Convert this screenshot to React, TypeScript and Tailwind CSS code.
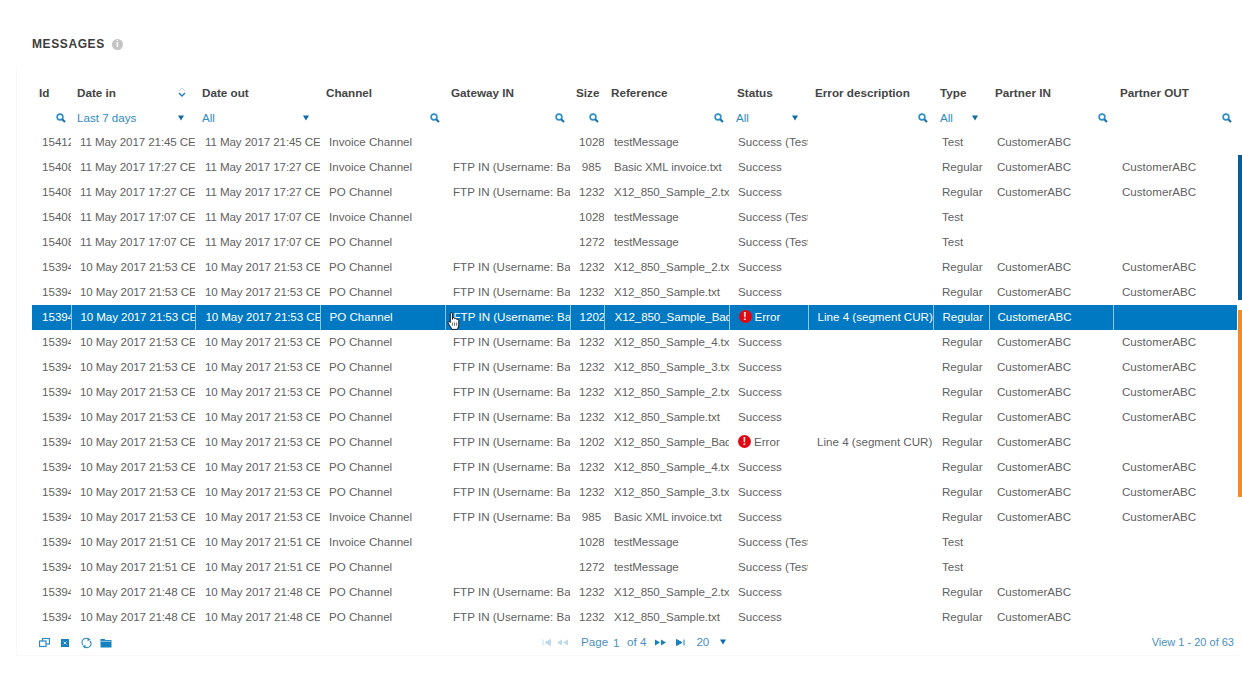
import React from "react";

const CABC = "CustomerABC";
const FTP = "FTP IN (Username: Basic)";
type Row = [string, string, string, string, string, string, string, string, string, string, string];
const d1 = "10 May 2017 21:53 CEST";
const S = "Success";
const T = "Success (Test)";
const E = "Line 4 (segment CUR), element 2";
const rows: Row[] = [
  ["15412", "11 May 2017 21:45 CEST", "Invoice Channel", "", "1028", "testMessage", T, "", "Test", CABC, ""],
  ["15408", "11 May 2017 17:27 CEST", "Invoice Channel", FTP, "985", "Basic XML invoice.txt", S, "", "Regular", CABC, CABC],
  ["15408", "11 May 2017 17:27 CEST", "PO Channel", FTP, "1232", "X12_850_Sample_2.txt", S, "", "Regular", CABC, CABC],
  ["15408", "11 May 2017 17:07 CEST", "Invoice Channel", "", "1028", "testMessage", T, "", "Test", "", ""],
  ["15408", "11 May 2017 17:07 CEST", "PO Channel", "", "1272", "testMessage", T, "", "Test", "", ""],
  ["15394", d1, "PO Channel", FTP, "1232", "X12_850_Sample_2.txt", S, "", "Regular", CABC, CABC],
  ["15394", d1, "PO Channel", FTP, "1232", "X12_850_Sample.txt", S, "", "Regular", CABC, CABC],
  ["15394", d1, "PO Channel", FTP, "1202", "X12_850_Sample_Bad.txt", "Error", E, "Regular", CABC, ""],
  ["15394", d1, "PO Channel", FTP, "1232", "X12_850_Sample_4.txt", S, "", "Regular", CABC, CABC],
  ["15394", d1, "PO Channel", FTP, "1232", "X12_850_Sample_3.txt", S, "", "Regular", CABC, CABC],
  ["15394", d1, "PO Channel", FTP, "1232", "X12_850_Sample_2.txt", S, "", "Regular", CABC, CABC],
  ["15394", d1, "PO Channel", FTP, "1232", "X12_850_Sample.txt", S, "", "Regular", CABC, CABC],
  ["15394", d1, "PO Channel", FTP, "1202", "X12_850_Sample_Bad.txt", "Error", E, "Regular", CABC, ""],
  ["15394", d1, "PO Channel", FTP, "1232", "X12_850_Sample_4.txt", S, "", "Regular", CABC, CABC],
  ["15394", d1, "PO Channel", FTP, "1232", "X12_850_Sample_3.txt", S, "", "Regular", CABC, CABC],
  ["15394", d1, "Invoice Channel", FTP, "985", "Basic XML invoice.txt", S, "", "Regular", CABC, CABC],
  ["15394", "10 May 2017 21:51 CEST", "Invoice Channel", "", "1028", "testMessage", T, "", "Test", "", ""],
  ["15394", "10 May 2017 21:51 CEST", "PO Channel", "", "1272", "testMessage", T, "", "Test", "", ""],
  ["15394", "10 May 2017 21:48 CEST", "PO Channel", FTP, "1232", "X12_850_Sample_2.txt", S, "", "Regular", CABC, ""],
  ["15394", "10 May 2017 21:48 CEST", "PO Channel", FTP, "1232", "X12_850_Sample.txt", S, "", "Regular", CABC, ""],
];

const widths = [39, 124, 125, 125, 125, 34, 125, 79, 125, 56, 124, 124];
const headers = ["Id", "Date in", "Date out", "Channel", "Gateway IN", "Size", "Reference", "Status", "Error description", "Type", "Partner IN", "Partner OUT"];
const headPad = ["pl-[7px]", "pl-[6px]", "pl-[7px]", "pl-[6px]", "pl-[6px]", "pl-[6px]", "pl-[7px]", "pl-[8px]", "pl-[7px]", "pl-[7px]", "pl-[6px]", "pl-[7px]"];
const cellPad = [
  "pl-[10px]",
  "pl-[9px] tracking-[-0.1px]",
  "pl-[10px] tracking-[-0.1px]",
  "pl-[9px]",
  "pl-[8px]",
  "pl-[9px] text-center",
  "pl-[10px] tracking-[-0.1px]",
  "pl-[9px]",
  "pl-[9px]",
  "pl-[9px]",
  "pl-[8px]",
  "pl-[9px]",
];

type F = { kind: "search" } | { kind: "select"; label: string; cls: string };
const filters: F[] = [
  { kind: "search" },
  { kind: "select", label: "Last 7 days", cls: "pl-[6px] pr-[11px]" },
  { kind: "select", label: "All", cls: "pl-[7px] pr-[11px]" },
  { kind: "search" },
  { kind: "search" },
  { kind: "search" },
  { kind: "search" },
  { kind: "select", label: "All", cls: "pl-[7px] pr-[10px]" },
  { kind: "search" },
  { kind: "select", label: "All", cls: "pl-[7px] pr-[11px]" },
  { kind: "search" },
  { kind: "search" },
];

function SearchIcon() {
  return (
    <svg width="10" height="10" viewBox="0 0 10 10" className="block">
      <circle cx="4" cy="4" r="2.9" fill="none" stroke="#2e90c8" strokeWidth="1.6" />
      <path d="M6.2 6.2 L9 9" stroke="#1b6fa5" strokeWidth="2" />
    </svg>
  );
}
function Arrow() {
  return (
    <svg width="6" height="6" viewBox="0 0 6 6" className="block">
      <path d="M0 0.5 H6 L3 5.5 Z" fill="#0b6aa8" />
    </svg>
  );
}
function Sort() {
  return (
    <svg width="8" height="10" viewBox="0 0 8 10" className="block">
      <path d="M1 4 L4 1 L7 4" fill="none" stroke="#b5d9ee" strokeWidth="1" />
      <path d="M1 6 L4 9 L7 6" fill="none" stroke="#1b7fbd" strokeWidth="1.4" />
    </svg>
  );
}
function ErrorBadge() {
  return (
    <span className="inline-flex w-[13px] h-[13px] rounded-full bg-[#e30613] text-white text-[10px] font-bold items-center justify-center leading-none mr-[3px] -translate-y-[1px]">
      !
    </span>
  );
}

const FOOT = "#2a8cc6";

export default function App() {
  return (
    <div className="relative w-[1242px] h-[683px] overflow-hidden bg-white font-['Liberation_Sans',Arial,sans-serif]">
      <div className="flex items-center gap-[7px] pl-[32px] h-[67px] pt-[21px]">
        <span className="text-[12px] font-bold tracking-[0.6px] text-[#3d3d3d]">MESSAGES</span>
        <span className="w-[11px] h-[11px] rounded-full bg-[#c4c4c4] text-white text-[9px] font-bold flex items-center justify-center leading-none">i</span>
      </div>

      <div className="ml-[16px] w-[1223px] border-l border-b border-[#f8f8f8] pl-[15px] pt-[13px]">
        <table className="table-fixed w-[1205px] border-collapse">
          <colgroup>
            {widths.map((w, i) => (
              <col key={i} style={{ width: w }} />
            ))}
          </colgroup>
          <thead>
            <tr className="h-[25px]">
              {headers.map((h, i) => (
                <th key={i} className={"p-0 text-left text-[11.7px] font-bold text-[#454545] overflow-hidden whitespace-nowrap " + headPad[i]}>
                  {i === 1 ? (
                    <div className="flex items-center justify-between pr-[9px]">
                      <span>{h}</span>
                      <Sort />
                    </div>
                  ) : (
                    h
                  )}
                </th>
              ))}
            </tr>
            <tr className="h-[25px]">
              {filters.map((f, i) => (
                <th key={i} className="p-0 pt-[1px] font-normal">
                  {f.kind === "search" ? (
                    <div className="flex justify-end pr-[5px]">
                      <SearchIcon />
                    </div>
                  ) : (
                    <div className={"flex items-center justify-between text-[11.6px] text-[#2f8ac4] " + f.cls}>
                      <span>{f.label}</span>
                      <Arrow />
                    </div>
                  )}
                </th>
              ))}
            </tr>
          </thead>
          <tbody>
            {rows.map((r, ri) => {
              const sel = ri === 7;
              const cells = [r[0], r[1], r[1], r[2], r[3], r[4], r[5], r[6], r[7], r[8], r[9], r[10]];
              return (
                <tr key={ri} className={sel ? "h-[25px] bg-[#0079c2] text-white" : "h-[25px] text-[#5f5f5f]"}>
                  {cells.map((c, ci) => (
                    <td
                      key={ci}
                      className={
                        "p-0 pb-[2px] text-[11.6px] overflow-hidden whitespace-nowrap " +
                        cellPad[ci] +
                        (sel && ci < 11 ? " border-r border-[#8cc8ec]" : "")
                      }
                    >
                      {c === "Error" ? (
                        <span>
                          <ErrorBadge />
                          {c}
                        </span>
                      ) : (
                        c
                      )}
                    </td>
                  ))}
                </tr>
              );
            })}
          </tbody>
        </table>

        <div className="relative flex items-center justify-between h-[25px] text-[11.6px] text-[#4a8fc0]">
          <div className="flex items-center gap-[9px] pl-[7px]">
            <svg width="11" height="11" viewBox="0 0 11 11">
              <rect x="3.5" y="1.5" width="7" height="5.5" fill="none" stroke={FOOT} strokeWidth="1.2" />
              <rect x="0.5" y="4" width="6.5" height="5.5" fill="#fff" stroke={FOOT} strokeWidth="1.2" />
            </svg>
            <svg className="ml-[1px]" width="10" height="10" viewBox="0 0 10 10">
              <rect x="1" y="1" width="8" height="8" fill="#1581bf" />
              <path d="M3.5 3.5 L6.5 6.5 M6.5 3.5 L3.5 6.5" stroke="#bfe0f3" strokeWidth="1" />
            </svg>
            <svg className="ml-[2px]" width="11" height="12" viewBox="0 0 11 12">
              <path d="M2 8 A4 4 0 0 1 8 2.7 M9 4 A4 4 0 0 1 3 9.3" fill="none" stroke={FOOT} strokeWidth="1.2" />
              <path d="M6.7 0.5 L9.5 2.8 L6.5 4.2 Z M4.3 11.5 L1.5 9.2 L4.5 7.8 Z" fill={FOOT} />
            </svg>
            <svg className="-ml-[1px]" width="12" height="10" viewBox="0 0 12 10">
              <path d="M0.5 1 H4.5 L5.5 2 H11.5 V9.5 H0.5 Z" fill="#1581bf" />
              <path d="M1 3.3 H11" stroke="#d5ebf7" strokeWidth="0.7" />
            </svg>
          </div>
          <div className="absolute left-[510px] top-0 h-[25px] flex items-center whitespace-nowrap">
            <svg className="opacity-30" width="9" height="7" viewBox="0 0 9 7">
              <path d="M1 0.5 V6.5 M8.5 0.5 V6.5 L3 3.5 Z" stroke={FOOT} fill={FOOT} strokeWidth="1" />
            </svg>
            <svg className="ml-[6px] opacity-30" width="11" height="7" viewBox="0 0 11 7">
              <path d="M5 0.5 V6.5 L0 3.5 Z M6 3.5 L11 0.5 V6.5 Z" fill={FOOT} />
            </svg>
            <span className="ml-[13px] -translate-y-[1px]">Page</span>
            <span className="ml-[5px] w-[12px]">1</span>
            <span className="ml-[2px] -translate-y-[1px]">of 4</span>
            <svg className="ml-[9px]" width="11" height="7" viewBox="0 0 11 7">
              <path d="M0 0.5 V6.5 L5 3.5 Z M6 0.5 V6.5 L11 3.5 Z" fill="#1581bf" />
            </svg>
            <svg className="ml-[10px]" width="9" height="7" viewBox="0 0 9 7">
              <path d="M0.5 0.5 V6.5 L6 3.5 Z M8 0.5 V6.5" stroke="#1581bf" fill="#1581bf" strokeWidth="1" />
            </svg>
            <span className="ml-[11px] -translate-y-[1px]">20</span>
            <span className="ml-[11px] -translate-y-[1px]">
              <Arrow />
            </span>
          </div>
          <span className="pr-[5px] text-[11px]">View 1 - 20 of 63</span>
        </div>
      </div>

      {/* scrollbar markers */}
      <div className="absolute left-[1238px] top-[155px] w-[4px] h-[145px] bg-[#005f9e]" />
      <div className="absolute left-[1238px] top-[310px] w-[4px] h-[187px] bg-[#f58a1f]" />

      {/* mouse pointer */}
      <svg className="absolute left-[447px] top-[312px]" width="14" height="19" viewBox="0 0 13 18">
        <path
          d="M3 1.5 C3 0.3 5 0.3 5 1.5 V7 L5.2 5.8 C5.6 5 6.8 5 7 6 L7.2 6.5 C7.6 5.8 8.8 5.9 9 6.8 L9.2 7.2 C9.6 6.6 11 6.8 11 8 V12 C11 14 10 15 9.6 16.5 H4.5 C4 15 2 12.5 1 10.5 C0.4 9.2 1.8 8.4 2.6 9.4 L3 10 Z"
          fill="#fff"
          stroke="#111"
          strokeWidth="0.9"
        />
        <path d="M5 10 V13 M7 10 V13 M9 10 V13" stroke="#111" strokeWidth="0.6" />
      </svg>
    </div>
  );
}
